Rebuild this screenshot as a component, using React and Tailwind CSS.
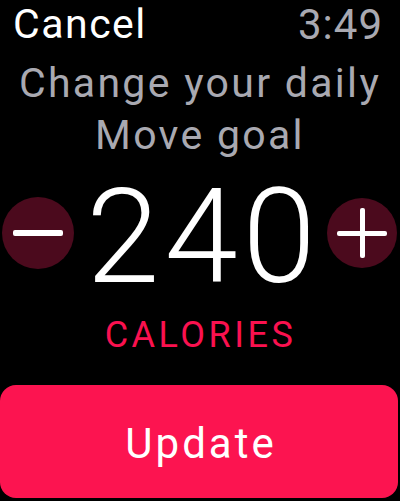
import React from 'react';

const App = () => {
  return (
    <div className="w-[400px] h-[501px] bg-black overflow-hidden flex flex-col font-['Roboto',sans-serif]">
      {/* Status row */}
      <div className="flex items-start justify-between pl-[13px] pr-[17px] h-[56px]">
        <span className="text-[41px] leading-[48px] text-white tracking-[1.5px]">Cancel</span>
        <span className="text-[42px] leading-[50px] text-[#a9a9b1] tracking-[1px]">3:49</span>
      </div>

      {/* Title */}
      <div className="text-center text-[41px] leading-[52px] text-[#a9a9b1] tracking-[2.3px] mt-[1px]">
        <div>Change your daily</div>
        <div>Move goal</div>
      </div>

      {/* Stepper */}
      <div className="flex items-start justify-between pl-[2px] pr-[3px] mt-[20px] h-[112px]">
        <button className="mt-[16px] w-[72px] h-[72px] rounded-full bg-[#4b0a1d] flex items-center justify-center">
          <span className="block w-[50px] h-[6px] rounded-[2px] bg-white" />
        </button>
        <span className="text-[132px] leading-[112px] text-white font-light tracking-[5px] pl-[6px]">240</span>
        <button className="mt-[17px] w-[70px] h-[70px] rounded-full bg-[#4b0a1d] flex items-center justify-center relative">
          <span className="block w-[50px] h-[5px] rounded-[2px] bg-white" />
          <span className="absolute w-[5px] h-[50px] rounded-[2px] bg-white" />
        </button>
      </div>

      <div className="text-center text-[36px] leading-[40px] text-[#fa114f] tracking-[3.5px] mt-[22px] pl-[1px]">
        CALORIES
      </div>

      <button className="mt-auto mb-[3px] w-[398px] h-[113px] rounded-[16px] bg-[#fc1450] text-white text-[42px] tracking-[3px] pt-[3px] pl-[4px]">
        Update
      </button>
    </div>
  );
};

export default App;
